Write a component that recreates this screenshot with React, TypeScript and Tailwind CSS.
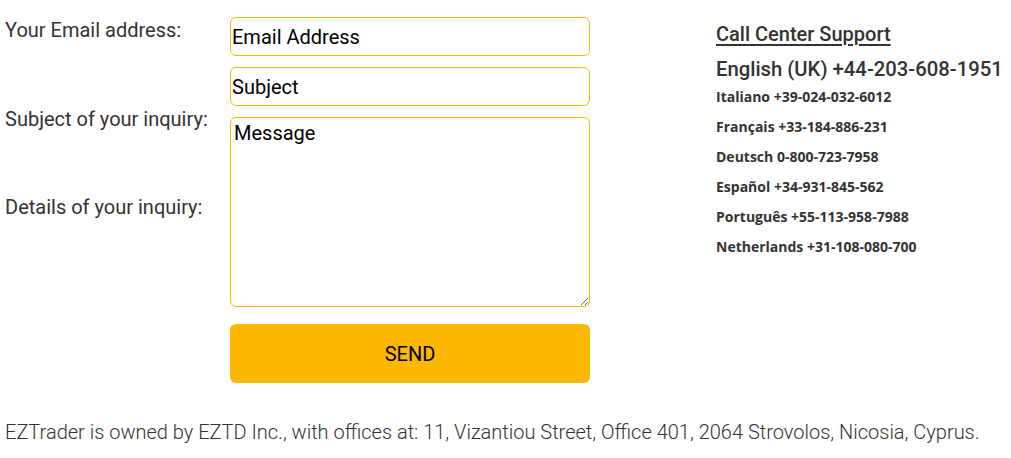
const phones = [
  "Italiano +39-024-032-6012",
  "Français +33-184-886-231",
  "Deutsch 0-800-723-7958",
  "Español +34-931-845-562",
  "Português +55-113-958-7988",
  "Netherlands +31-108-080-700",
]

export default function App() {
  return (
    <main className="h-[458px] w-[1011px] overflow-hidden bg-white font-['Roboto',sans-serif] text-[#333]">
      <div className="flex">
        {/* Labels */}
        <div className="w-[230px] shrink-0 pl-[5px] text-[20px] leading-[23px]">
          <div className="mt-[19px]">Your Email address:</div>
          <div className="mt-[66px]">Subject of your inquiry:</div>
          <div className="mt-[65px]">Details of your inquiry:</div>
        </div>

        {/* Form */}
        <form className="mt-[17px] flex w-[360px] shrink-0 flex-col">
          <input
            placeholder="Email Address"
            className="h-[39px] rounded-[6px] border border-[#fbb800] px-px text-[20px] text-black placeholder:text-black outline-none"
          />
          <input
            placeholder="Subject"
            className="mt-[11px] h-[39px] rounded-[6px] border border-[#fbb800] px-px text-[20px] text-black placeholder:text-black outline-none"
          />
          <textarea
            placeholder="Message"
            className="mt-[11px] h-[190px] rounded-[6px] border border-[#fbb800] px-[3px] py-[3px] text-[20px] leading-[24px] text-black placeholder:text-black outline-none"
          />
          <button
            type="button"
            className="mt-[17px] h-[59px] rounded-[6px] bg-[#ffb800] text-[20px] font-normal text-black"
          >
            SEND
          </button>
        </form>

        {/* Call center */}
        <div className="ml-[126px] pt-[22px]">
          <h3 className="text-[20px] font-medium leading-[24px] underline underline-offset-[3px]">
            Call Center Support
          </h3>
          <p className="mt-[11px] text-[20.3px] font-medium leading-[24px]">
            English (UK) +44-203-608-1951
          </p>
          <ul className="mt-[1px] font-['Open_Sans',sans-serif] text-[14px] font-bold leading-[30px]">
            {phones.map((p) => (
              <li key={p}>{p}</li>
            ))}
          </ul>
        </div>
      </div>

      {/* Footer */}
      <p className="mt-[38px] pl-[5px] text-[20px] font-light leading-[23px]">
        EZTrader is owned by EZTD Inc., with offices at: 11, Vizantiou Street, Office 401, 2064 Strovolos, Nicosia, Cyprus.
      </p>
    </main>
  )
}
